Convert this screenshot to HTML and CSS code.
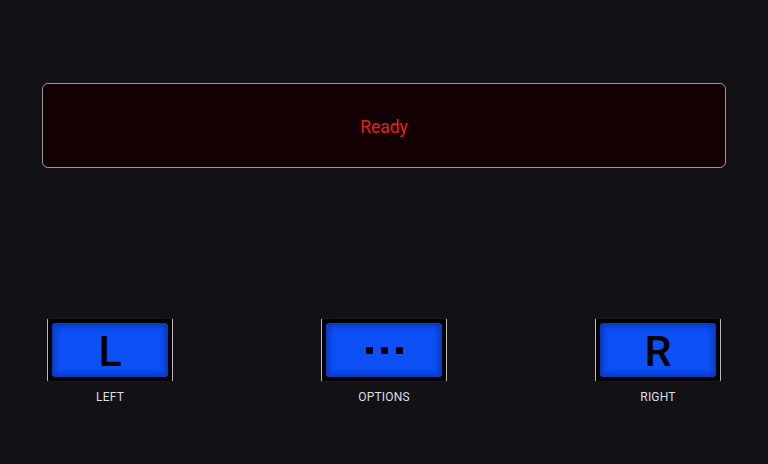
FILE: index.html
```html
<!DOCTYPE html>
<html>
<head>
<meta charset="utf-8">
<link rel="stylesheet" href="styles.css">
</head>
<body>
<div class="app">
  <div class="display"><span class="status">Ready</span></div>
  <div class="controls">
    <div class="control">
      <button class="key"><span class="face"><span class="glyph">L</span></span></button>
      <div class="label">LEFT</div>
    </div>
    <div class="control">
      <button class="key"><span class="face"><span class="dots"><i></i><i></i><i></i></span></span></button>
      <div class="label">OPTIONS</div>
    </div>
    <div class="control">
      <button class="key"><span class="face"><span class="glyph">R</span></span></button>
      <div class="label">RIGHT</div>
    </div>
  </div>
</div>
</body>
</html>
```
FILE: styles.css
```css
html, body {
  margin: 0;
  padding: 0;
  background: #111116;
  width: 768px;
  height: 464px;
  overflow: hidden;
  font-family: Roboto, "Liberation Sans", sans-serif;
}
.app {
  padding: 83px 42px 0 42px;
  display: flex;
  flex-direction: column;
}
.display {
  height: 83px;
  border: 1px solid #9a9a9e;
  border-radius: 6px;
  background: #120002;
  display: flex;
  align-items: center;
  justify-content: center;
}
.status {
  color: #e5201e;
  font-size: 17.5px;
  margin-top: 3px;
}
.controls {
  margin-top: 150px;
  display: flex;
  justify-content: space-between;
}
.control {
  width: 136px;
  display: flex;
  flex-direction: column;
  align-items: center;
}
.key {
  width: 126px;
  height: 64px;
  padding: 4px;
  margin: 0;
  box-sizing: border-box;
  background: #000;
  border: 1px solid;
  border-color: #1a1a1e #b8b8bc;
  border-radius: 2px;
  display: flex;
}
.face {
  flex: 1;
  border-radius: 4px;
  background: #0c50f6;
  box-shadow: inset 0 0 5px 4px #0a3cc4, inset 0 0 1px 1px #062a78;
  display: flex;
  align-items: center;
  justify-content: center;
}
.glyph {
  font-family: Roboto, "DejaVu Sans", sans-serif;
  font-weight: 500;
  font-size: 43px;
  line-height: 1;
  color: #000;
  margin-top: 2px;
}
.dots {
  display: flex;
  gap: 8px;
  margin-top: 1px;
}
.dots i {
  display: block;
  width: 7px;
  height: 7px;
  background: #000;
}
.label {
  margin-top: 8px;
  color: #dedee2;
  font-size: 12px;
  letter-spacing: 0.2px;
}
```
